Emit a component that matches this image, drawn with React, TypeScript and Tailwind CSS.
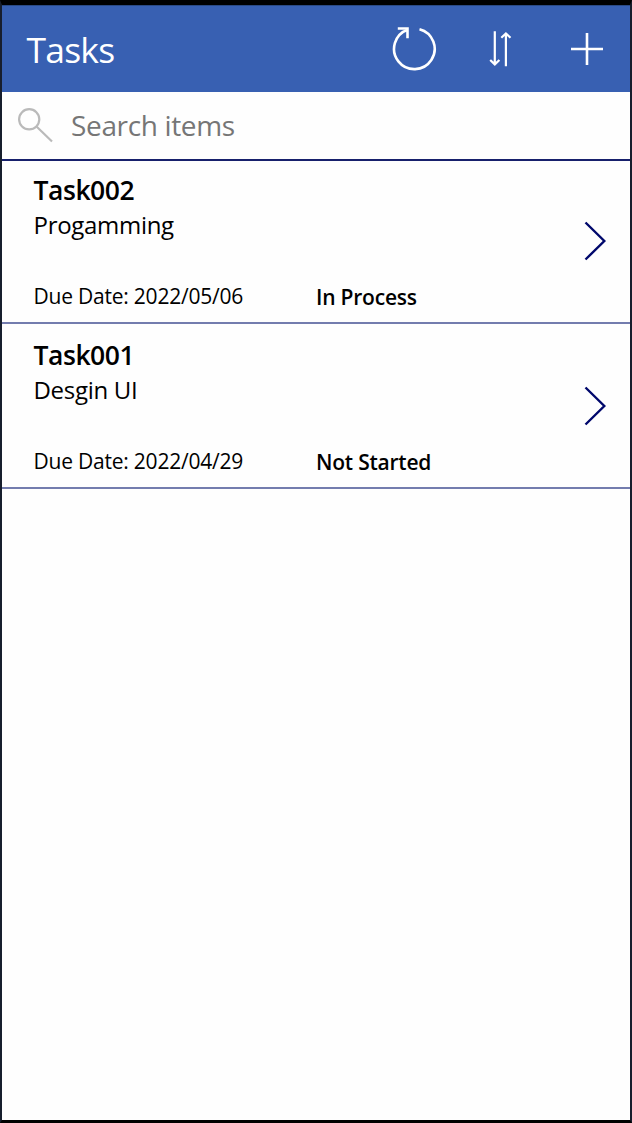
const tasks = [
  { id: "Task002", title: "Progamming", due: "2022/05/06", status: "In Process" },
  { id: "Task001", title: "Desgin UI", due: "2022/04/29", status: "Not Started" },
];

function Header() {
  return (
    <header className="flex h-[87px] shrink-0 items-center border-t border-[#2a4a85] bg-[#3860b2] pl-[24.5px] text-white">
      <h1 className="flex-1 text-[35.5px] leading-[48px] font-normal tracking-[-0.8px]">Tasks</h1>
      <button aria-label="Refresh" className="mr-[50px]">
        <svg width="48" height="48" viewBox="0 0 48 48" fill="none" stroke="currentColor" strokeWidth="2.6" className="block">
          <path d="M29.5 4.2A20.3 20.3 0 1 1 17.6 4.7" />
          <path d="M7.8 3.5H17.5V13.2" />
        </svg>
      </button>
      <button aria-label="Sort" className="mr-[59px]">
        <svg width="24" height="40" viewBox="0 0 24 40" fill="none" stroke="currentColor" strokeWidth="2.2" className="block">
          <path d="M6.8 2.3V35.4M2.2 31L6.8 35.4L11.4 31" />
          <path d="M17.9 37.3V4.4M13.3 8.8L17.9 4.4L22.5 8.8" />
        </svg>
      </button>
      <button aria-label="Add" className="mr-[27px]">
        <svg width="32" height="32" viewBox="0 0 32 32" fill="none" stroke="currentColor" strokeWidth="2.6" className="block">
          <path d="M16 0V32M0 16H32" />
        </svg>
      </button>
    </header>
  );
}

function SearchBar() {
  return (
    <div className="flex h-[69px] shrink-0 items-center border-b-2 border-[#17206c] pl-[15px]">
      <svg width="38" height="38" viewBox="0 0 38 38" fill="none" stroke="#bababa" strokeWidth="2.2" className="shrink-0">
        <circle cx="12.2" cy="12.3" r="10.1" />
        <path d="M19.5 19.5L35 34.5" />
      </svg>
      <input
        placeholder="Search items"
        className="mb-0.5 ml-[16px] w-[400px] bg-transparent text-[28px] leading-[38px] tracking-[-0.35px] outline-none placeholder:text-[#767676]"
      />
    </div>
  );
}

export default function App() {
  return (
    <div className="flex h-[1123px] w-[632px] flex-col border-x-2 border-t-[5px] border-b-[3px] border-x-[#171e2d] border-y-black bg-[#fefefe] font-['Open_Sans',sans-serif] text-black">
      <Header />
      <SearchBar />
      <ul className="-mt-0.5">
        {tasks.map((task) => (
          <li key={task.id} className="flex h-[165px] border-b-2 border-[#737cae] pl-[31.5px]">
            <div className="flex-1 pt-[13px]">
              <h2 className="text-[26.5px] leading-[36px] font-semibold tracking-[-0.45px]">{task.id}</h2>
              <p className="text-[24px] leading-[34px] tracking-[-0.3px]">{task.title}</p>
              <div className="mt-[39px] flex text-[21px] leading-[30px] tracking-[-0.22px]">
                <span className="w-[282.5px]">Due Date: {task.due}</span>
                <span className="pt-px font-semibold">{task.status}</span>
              </div>
            </div>
            <svg width="24" height="40" viewBox="0 0 24 40" fill="none" stroke="#00086c" strokeWidth="2.4" className="mt-[62px] mr-[22px] shrink-0">
              <path d="M1.5 1.5L20.3 20L1.5 38.5" />
            </svg>
          </li>
        ))}
      </ul>
    </div>
  );
}
